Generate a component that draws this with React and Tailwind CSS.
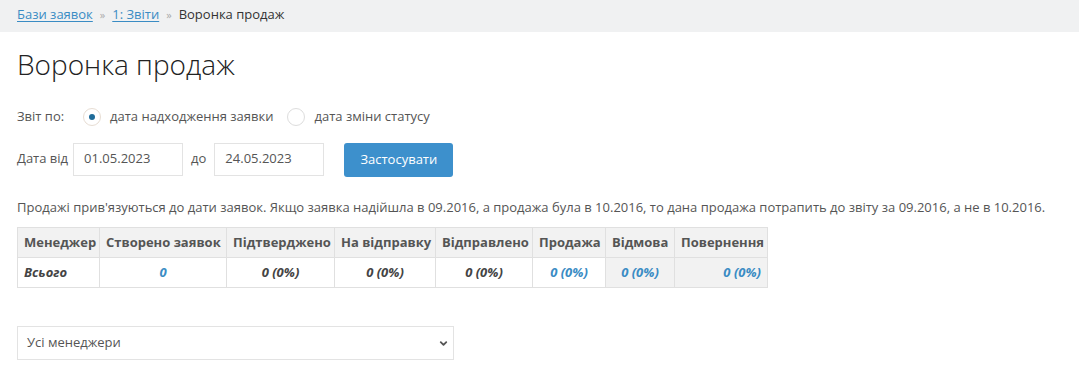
import { ChevronDown } from 'lucide-react';

const cols = [
  { label: 'Менеджер', value: 'Всього', cls: 'text-left text-[#444]', w: 'w-[82px]' },
  { label: 'Створено заявок', value: '0', cls: 'text-center text-[#3a8cc4]', w: 'w-[127px]' },
  { label: 'Підтверджено', value: '0 (0%)', cls: 'text-center text-[#444]', w: 'w-[108px]' },
  { label: 'На відправку', value: '0 (0%)', cls: 'text-center text-[#444]', w: 'w-[101px]' },
  { label: 'Відправлено', value: '0 (0%)', cls: 'text-center text-[#444]', w: 'w-[97px]' },
  { label: 'Продажа', value: '0 (0%)', cls: 'text-center text-[#3a8cc4]', w: 'w-[73px]' },
  { label: 'Відмова', value: '0 (0%)', cls: 'text-center text-[#3a8cc4] bg-[#f2f2f2]', w: 'w-[69px]' },
  { label: 'Повернення', value: '0 (0%)', cls: 'text-right text-[#3a8cc4] bg-[#f2f2f2]', w: 'w-[93px]' },
];

function Radio({ checked, label }) {
  return (
    <label className="flex items-center gap-[9px]">
      <span className={`w-[18px] h-[18px] rounded-full border flex items-center justify-center bg-white ${checked ? 'border-[#e7ddd3]' : 'border-[#dddddd]'}`}>
        {checked && <span className="w-[6px] h-[6px] rounded-full bg-[#1f6b99]" />}
      </span>
      <span>{label}</span>
    </label>
  );
}

export default function App() {
  return (
    <div className="min-h-screen bg-white text-[13px] text-[#555] font-['Open_Sans',sans-serif]">
      {/* Breadcrumb */}
      <div className="h-[32px] bg-[#f0f1f2] flex items-center px-[17px] gap-[7px] pb-[2px]">
        <a className="text-[#3a8cc4] underline underline-offset-2">Бази заявок</a>
        <span className="text-[#aaa] text-[11px]">»</span>
        <a className="text-[#3a8cc4] underline underline-offset-2">1: Звіти</a>
        <span className="text-[#aaa] text-[11px]">»</span>
        <span className="text-[#333]">Воронка продаж</span>
      </div>

      <div className="px-[17px]">
        <h1 className="text-[28px] font-light text-[#222] leading-[36px] mt-[14px]">Воронка продаж</h1>

        {/* Report by */}
        <div className="flex items-center mt-[25px] h-[20px]">
          <span className="w-[66px]">Звіт по:</span>
          <div className="flex items-center gap-[14px]">
            <Radio checked label="дата надходження заявки" />
            <Radio label="дата зміни статусу" />
          </div>
        </div>

        {/* Dates */}
        <div className="flex items-center mt-[14px]">
          <span className="mr-[5px]">Дата від</span>
          <div className="w-[110px] h-[33px] border border-[#e3e3e3] flex items-center px-[10px] text-[#555]">01.05.2023</div>
          <span className="mx-[8px]">до</span>
          <div className="w-[110px] h-[33px] border border-[#e3e3e3] flex items-center px-[10px] text-[#555]">24.05.2023</div>
          <button className="ml-[20px] w-[109px] h-[34px] mt-[2px] rounded-[3px] bg-[#3d90cc] text-white">Застосувати</button>
        </div>

        <p className="mt-[21px] leading-[18px]">
          Продажі прив'язуються до дати заявок. Якщо заявка надійшла в 09.2016, а продажа була в 10.2016, то дана продажа потрапить до звіту за 09.2016, а не в 10.2016.
        </p>

        {/* Table */}
        <table className="mt-[11px] table-fixed w-[751px] border-collapse border border-[#e0e0e0]">
          <thead>
            <tr className="bg-[#f2f2f2]">
              {cols.map((c) => (
                <th key={c.label} className={`${c.w} h-[30px] px-[6px] border border-[#e0e0e0] font-bold text-[#555] text-center whitespace-nowrap`}>
                  {c.label}
                </th>
              ))}
            </tr>
          </thead>
          <tbody>
            <tr>
              {cols.map((c) => (
                <td key={c.label} className={`h-[30px] px-[6px] border border-[#e0e0e0] font-bold italic ${c.cls}`}>
                  {c.value}
                </td>
              ))}
            </tr>
          </tbody>
        </table>

        {/* Manager select */}
        <div className="mt-[38px] w-[437px] h-[34px] border border-[#e3e3e3] flex items-center justify-between pl-[9px] pr-[4px] text-[#555]">
          <span>Усі менеджери</span>
          <ChevronDown className="w-[11px] h-[11px] text-[#555]" strokeWidth={4} />
        </div>
      </div>
    </div>
  );
}
